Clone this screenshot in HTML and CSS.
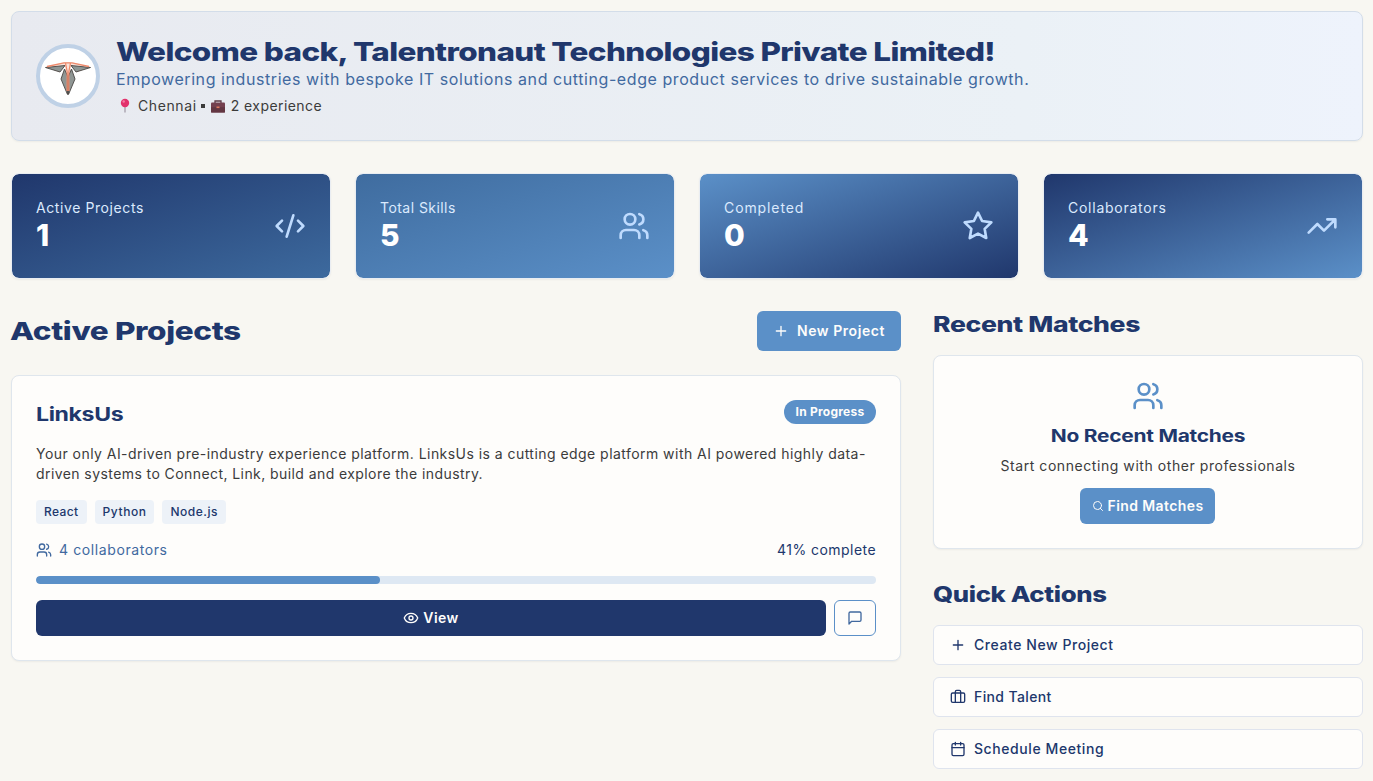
FILE: index.html
```html
<!DOCTYPE html>
<html lang="en">
<head>
<meta charset="utf-8">
<title>Dashboard</title>
<link rel="stylesheet" href="styles.css">
</head>
<body>
<svg class="sprite" width="0" height="0" aria-hidden="true">
  <symbol id="users" viewBox="0 0 24 24"><path d="M16 21v-2a4 4 0 0 0-4-4H6a4 4 0 0 0-4 4v2"/><circle cx="9" cy="7" r="4"/><path d="M22 21v-2a4 4 0 0 0-3-3.87"/><path d="M16 3.130a4 4 0 0 1 0 7.750"/></symbol>
  <symbol id="plus" viewBox="0 0 24 24"><path d="M5 12h14M12 5v14"/></symbol>
</svg>
<div class="page">
  <header class="welcome">
    <div class="avatar">
      <svg viewBox="0 0 56 56" width="56" height="56">
        <path d="M5 19 25 14H31L51 19 37 24 31 18 28 47 25 18 19 24Z" fill="#fbe3da"/>
        <path d="M5.500 19.500 25 17.500 20 24Z" fill="#8f9694" stroke="#4a4543" stroke-width=".9"/>
        <path d="M50.500 19.500 31 17.500 36 24Z" fill="#8f9694" stroke="#4a4543" stroke-width=".9"/>
        <path d="M24.500 21 27.500 28V46.500L21 31Z" fill="#8f9694" stroke="#4a4543" stroke-width=".9"/>
        <path d="M31.500 21 28.500 28V46.500L35 31Z" fill="#8f9694" stroke="#4a4543" stroke-width=".9"/>
        <path d="M7 18.500 24 14.800H32L49 18.500M25.500 15 27.200 24V43M30.500 15 28.800 24V43" fill="none" stroke="#ee8a6c" stroke-width="1.300"/>
      </svg>
    </div>
    <div class="welcome-text">
      <h1 class="wide"><span class="w-h1">Welcome back, Talentronaut Technologies Private Limited!</span></h1>
      <p class="tagline">Empowering industries with bespoke IT solutions and cutting-edge product services to drive sustainable growth.</p>
      <p class="meta">
        <svg class="pin" viewBox="0 0 18 16" width="18" height="16"><path d="M8.300 8h1.400v6.500H8.300z" fill="#a9a3ae"/><circle cx="9" cy="5" r="4.200" fill="#e2326c"/><circle cx="7.700" cy="3.500" r="1.200" fill="#f67ba3"/></svg>
        <span class="t-city">Chennai</span><i class="dot"></i>
        <svg class="case" viewBox="0 0 16 16" width="16" height="16"><path d="M5 5V3h6v2" fill="none" stroke="#5d3a45" stroke-width="1.300"/><rect x="1" y="4.500" width="14" height="10" rx="1" fill="#74404f"/><path d="M1 9.200h14v5.300H1z" fill="#633642"/><path d="M6.500 8.500h3v1.600h-3z" fill="#e0785f"/></svg>
        <span class="t-exp">2 experience</span>
      </p>
    </div>
  </header>

  <section class="stats">
    <div class="stat stat-a"><div><p class="stat-label l1">Active Projects</p><p class="stat-value">1</p></div>
      <svg class="icon" viewBox="0 0 24 24" width="32" height="32"><path d="m18 16 4-4-4-4M6 8l-4 4 4 4M14.500 4l-5 16"/></svg></div>
    <div class="stat stat-b"><div><p class="stat-label l2">Total Skills</p><p class="stat-value">5</p></div>
      <svg class="icon" width="32" height="32"><use href="#users"/></svg></div>
    <div class="stat stat-c"><div><p class="stat-label l3">Completed</p><p class="stat-value">0</p></div>
      <svg class="icon" viewBox="0 0 24 24" width="32" height="32"><path d="m12 2 3.090 6.260L22 9.270l-5 4.870 1.180 6.880L12 17.770l-6.180 3.250L7 14.140 2 9.270l6.910-1.010z"/></svg></div>
    <div class="stat stat-d"><div><p class="stat-label l4">Collaborators</p><p class="stat-value">4</p></div>
      <svg class="icon" viewBox="0 0 24 24" width="32" height="32"><path d="m22 7-8.500 8.500-5-5L2 17M16 7h6v6"/></svg></div>
  </section>

  <div class="columns">
    <main>
      <div class="main-head">
        <h2 class="wide main-title"><span class="w-h2">Active Projects</span></h2>
        <button class="btn btn-new"><svg class="icon" width="16" height="16"><use href="#plus"/></svg><span class="t-new">New Project</span></button>
      </div>
      <article class="card project">
        <div class="project-head"><h3 class="wide"><span class="w-links">LinksUs</span></h3><span class="badge">In Progress</span></div>
        <p class="desc"><span class="d1">Your only AI-driven pre-industry experience platform. LinksUs is a cutting edge platform with AI powered highly data-</span><br><span class="d2">driven systems to Connect, Link, build and explore the industry.</span></p>
        <div class="tags"><span class="tag">React</span><span class="tag tag-py">Python</span><span class="tag tag-node">Node.js</span></div>
        <div class="status"><span class="collab"><svg class="icon" width="16" height="16"><use href="#users"/></svg><span class="t-collab">4 collaborators</span></span><span class="t-done">41% complete</span></div>
        <div class="bar"><div class="bar-fill" style="width:41%"></div></div>
        <div class="actions">
          <button class="btn btn-view"><svg class="icon" viewBox="0 0 24 24" width="16" height="16"><path d="M2.060 12.350a1 1 0 0 1 0-.700 10.750 10.750 0 0 1 19.880 0 1 1 0 0 1 0 .700 10.750 10.750 0 0 1-19.880 0"/><circle cx="12" cy="12" r="3"/></svg><span>View</span></button>
          <button class="btn btn-chat"><svg class="icon" viewBox="0 0 24 24" width="16" height="16"><path d="M21 15a2 2 0 0 1-2 2H7l-4 4V5a2 2 0 0 1 2-2h14a2 2 0 0 1 2 2z"/></svg></button>
        </div>
      </article>
    </main>
    <aside>
      <h2 class="wide side-title"><span class="w-recent">Recent Matches</span></h2>
      <div class="card empty">
        <svg class="icon" width="32" height="32"><use href="#users"/></svg>
        <h3 class="wide"><span class="w-none">No Recent Matches</span></h3>
        <p class="t-start">Start connecting with other professionals</p>
        <button class="btn btn-find"><svg class="icon" viewBox="0 0 24 24" width="12" height="12"><circle cx="11" cy="11" r="8"/><path d="m21 21-4.300-4.300"/></svg><span>Find Matches</span></button>
      </div>
      <h2 class="wide side-title"><span class="w-quick">Quick Actions</span></h2>
      <div class="quick">
        <button class="quick-btn"><svg class="icon" width="16" height="16"><use href="#plus"/></svg><span class="q1">Create New Project</span></button>
        <button class="quick-btn"><svg class="icon" viewBox="0 0 24 24" width="16" height="16"><rect x="2" y="6" width="20" height="14" rx="2"/><path d="M16 20V4a2 2 0 0 0-2-2h-4a2 2 0 0 0-2 2v16"/></svg><span class="q2">Find Talent</span></button>
        <button class="quick-btn"><svg class="icon" viewBox="0 0 24 24" width="16" height="16"><rect x="3" y="4" width="18" height="18" rx="2"/><path d="M8 2v4M16 2v4M3 10h18"/></svg><span class="q3">Schedule Meeting</span></button>
      </div>
    </aside>
  </div>
</div>
</body>
</html>
```
FILE: styles.css
```css
* { box-sizing: border-box; margin: 0; padding: 0; }
body { background: #f8f7f2; font-family: Inter, "Liberation Sans", sans-serif; font-size: 14px; line-height: 20px; color: #3b3b3b; overflow: hidden; }
.sprite { position: absolute; }
.icon { fill: none; stroke: currentColor; stroke-width: 2; stroke-linecap: round; stroke-linejoin: round; flex: none; display: block; }
.page { padding: 11px 10px 0 11px; }
span { white-space: nowrap; }

/* Extended headings */
.wide { color: #20376c; font-weight: 800; }
.wide span { display: inline-block; transform-origin: 0 50%; letter-spacing: -.3px; }
.wide .w-h1 { letter-spacing: -.5px; transform: scaleX(1.209); }
.wide .w-h2 { transform: scaleX(1.26); }
.wide .w-links { transform: scaleX(1.215); }
.wide .w-recent { transform: scaleX(1.265); }
.wide .w-quick { transform: scaleX(1.225); }
.wide .w-none { letter-spacing: -.2px; transform: scaleX(1.23); transform-origin: 50% 50%; }

.welcome { height: 130px; border: 1px solid #d3dde9; border-radius: 8px; padding: 0 24px; display: flex; align-items: center; gap: 16px; background: linear-gradient(90deg, #e8eaf0, #ebf1f6 75%, #eef3fc); box-shadow: 0 1px 2px rgba(0,0,0,.05); }
.avatar { width: 64px; height: 64px; border: 4px solid #bfd1e6; border-radius: 50%; background: #fff; overflow: hidden; }
.avatar svg { display: block; }
h1 { font-size: 26px; line-height: 32px; padding-top: 1px; }
.tagline { font-size: 16px; line-height: 24px; margin-top: -1px; color: #41699f; white-space: nowrap; letter-spacing: .575px; }
.meta { display: flex; align-items: center; height: 20px; margin-top: 5px; margin-bottom: 2px; }
.case { margin: 0 5px 0 5px; }
.pin { margin-right: 4px; }
.dot { width: 4px; height: 4px; background: #3b3b3b; margin-left: 4px; }
.t-city { letter-spacing: .6px; }
.t-exp { letter-spacing: .44px; }

.stats { display: grid; grid-template-columns: repeat(4, 1fr); gap: 24px; margin-top: 32px; }
.stat { height: 106px; border: 1px solid #e9edf2; border-radius: 8px; padding: 0 24px; display: flex; align-items: center; justify-content: space-between; color: #bfdbfe; background-clip: padding-box; box-shadow: 0 1px 2px rgba(0,0,0,.05); }
.stat-a { background-image: linear-gradient(to bottom right, #20376c, #3d6a9e); }
.stat-b { background-image: linear-gradient(to bottom right, #3f6c9f, #5b90c8); }
.stat-c { background-image: linear-gradient(to bottom right, #5b90c8, #20376c); }
.stat-d { background-image: linear-gradient(to bottom right, #20376c, #5b90c8); }
.stat-label { color: #dbeafe; }
.l1 { letter-spacing: .59px; }
.l2 { letter-spacing: .45px; }
.l3 { letter-spacing: .9px; }
.l4 { letter-spacing: .75px; }
.stat-value { color: #fff; font-size: 30px; line-height: 34px; font-weight: 800; padding-bottom: 2px; }

.columns { display: grid; grid-template-columns: 890px 1fr; gap: 32px; margin-top: 32px; }
.main-head { height: 40px; display: flex; align-items: center; justify-content: space-between; }
.main-title { font-size: 25px; line-height: 32px; margin-left: -1px; }
.btn { font: inherit; border: 0; border-radius: 6px; display: flex; align-items: center; justify-content: center; background: #5b90c8; color: #fefdfb; font-weight: 600; letter-spacing: .4px; }
.btn-new { width: 144px; height: 40px; gap: 8px; letter-spacing: .55px; }
.card { background: #fefdfb; border: 1px solid #dfe6ed; border-radius: 8px; box-shadow: 0 1px 2px rgba(0,0,0,.05); }
.project { margin-top: 24px; height: 286px; padding: 24px; }
.project-head { display: flex; justify-content: space-between; height: 28px; }
.project-head h3 { font-size: 19px; line-height: 28px; font-weight: 700; padding-top: 1px; }
.badge { width: 92px; height: 24px; line-height: 24px; border-radius: 12px; background: #5b90c8; color: #fefdfb; font-size: 12px; font-weight: 700; text-align: center; letter-spacing: .25px; }
.desc { margin-top: 16px; }
.d1 { letter-spacing: .455px; }
.d2 { letter-spacing: .42px; }
.tags { display: flex; gap: 8px; margin-top: 16px; }
.tag { height: 24px; line-height: 24px; padding: 0 8px; border-radius: 4px; background: #edf2f8; color: #20376c; font-size: 12px; font-weight: 500; letter-spacing: .4px; }
.tag-py { letter-spacing: .55px; }
.tag-node { letter-spacing: .5px; }
.status { display: flex; justify-content: space-between; margin-top: 16px; color: #20376c; }
.collab { display: flex; align-items: center; gap: 7px; color: #41699f; letter-spacing: .6px; }
.t-done { letter-spacing: .45px; }
.bar { height: 8px; border-radius: 4px; margin-top: 16px; background: #dee8f3; overflow: hidden; }
.bar-fill { height: 8px; border-radius: 4px; background: #5b90c8; }
.actions { display: flex; gap: 8px; margin-top: 16px; }
.btn-view { flex: 1; height: 36px; gap: 4px; background: #20376c; }
.btn-chat { width: 42px; height: 36px; background: #fefdfb; border: 1px solid #5b90c8; color: #41699f; }

.side-title { font-size: 21px; line-height: 28px; }
.empty { height: 194px; margin: 16px 0 32px; padding-top: 24px; display: flex; flex-direction: column; align-items: center; color: #5b90c8; }
.empty h3 { font-size: 17px; line-height: 24px; margin-top: 12px; font-weight: 700; }
.empty p { color: #3b3b3b; margin-top: 8px; letter-spacing: .56px; }
.btn-find { width: 135px; height: 36px; margin: 12px 1px 0 0; gap: 4px; }
.quick { display: flex; flex-direction: column; gap: 12px; margin-top: 16px; }
.quick-btn { font: inherit; font-weight: 500; height: 40px; border: 1px solid #dfe4ee; border-radius: 6px; background: #fefdfb; color: #20376c; display: flex; align-items: center; gap: 8px; padding: 0 16px; }
.q1 { letter-spacing: .56px; }
.q2 { letter-spacing: .38px; }
.q3 { letter-spacing: .58px; }
```
